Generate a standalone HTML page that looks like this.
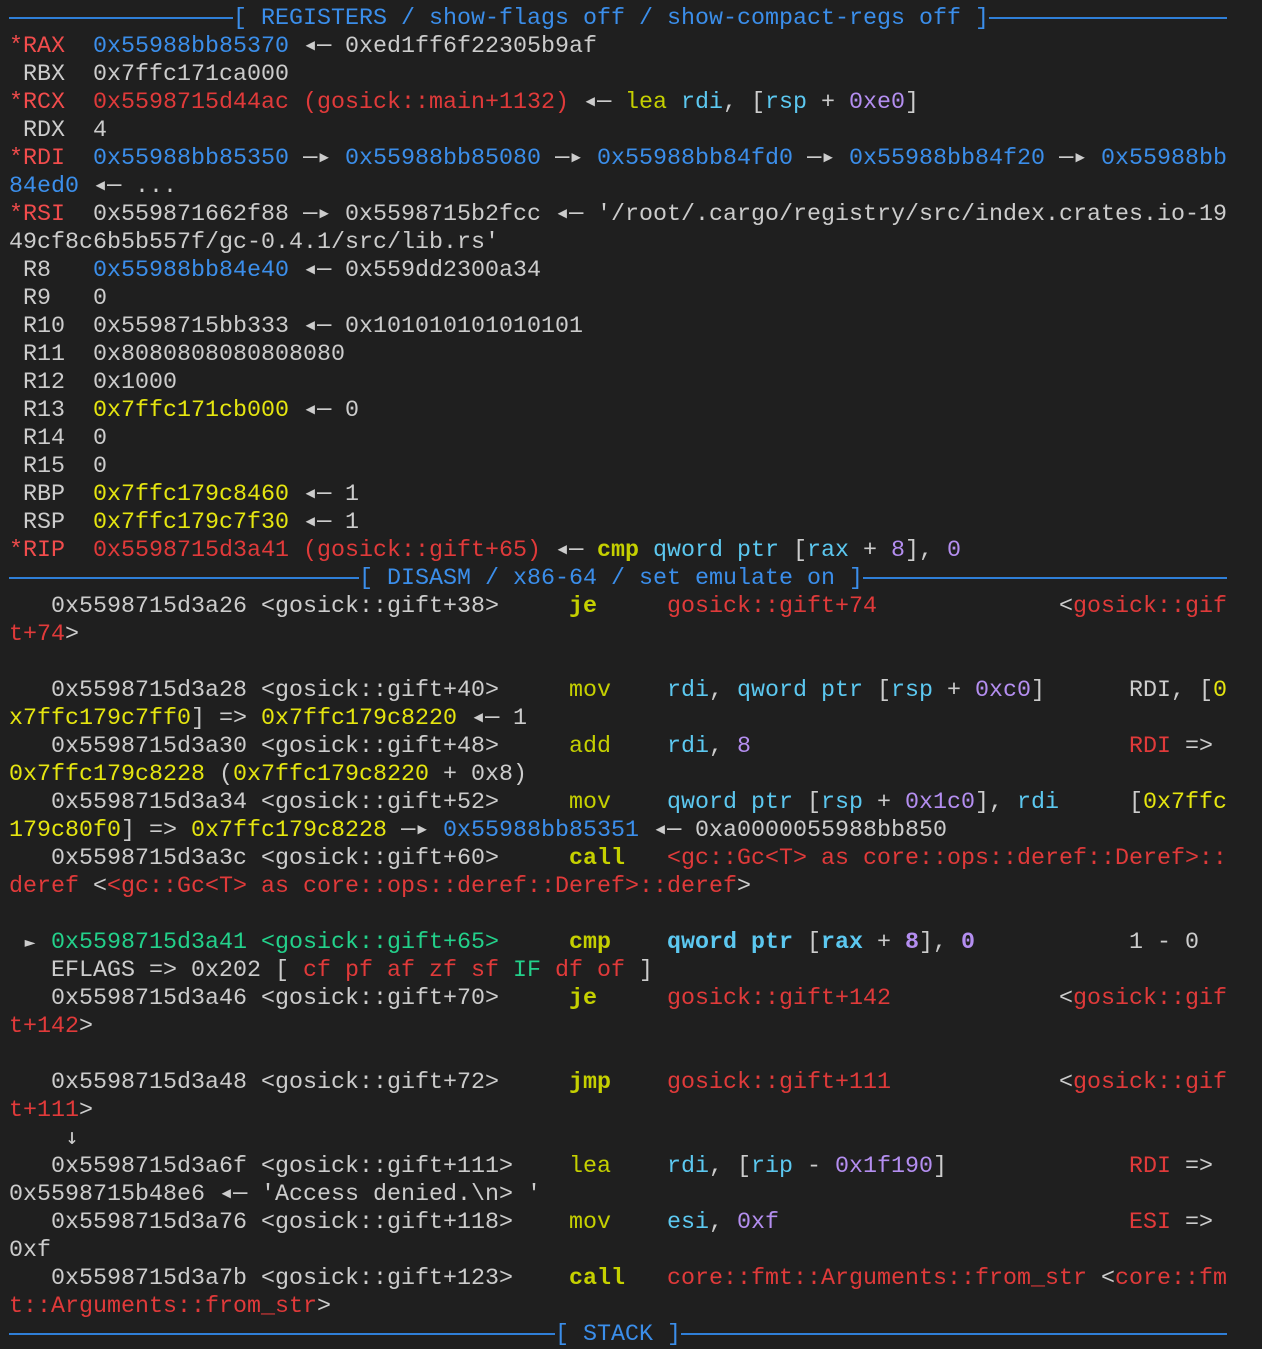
<!DOCTYPE html>
<html><head><meta charset="utf-8"><style>
html,body{margin:0;padding:0;background:#1f1f1f;}
body{width:1262px;height:1346px;overflow:hidden;}
#t{position:absolute;left:9px;top:5px;font-family:"Liberation Mono","DejaVu Sans Mono",monospace;font-size:23.33px;line-height:28px;color:#cccccc;}
.l{height:28px;white-space:pre;}
.R{color:#f14c4c}.r{color:#e03a3a}.b{color:#3b8eea}.y{color:#e5e510}.g{color:#23d18b}
.m{color:#c5d000}.B{font-weight:bold}.c{color:#5cc8f0}.p{color:#b48ef0}
.a{display:inline-block;width:14px;text-align:center;font-family:"DejaVu Sans Mono",monospace;font-size:24px;line-height:20px}
.hl{display:inline-block;height:2px;background:#2f7fd8;vertical-align:middle;}
.h{color:#3b8eea}
</style></head><body><div id="t"><div class="l"><span class="hl" style="width:224px"></span><span class="h">[ REGISTERS / show-flags off / show-compact-regs off ]</span><span class="hl" style="width:238px"></span></div>
<div class="l"><span class="R">*RAX</span>  <span class="b">0x55988bb85370</span> <span class="a">◂</span><span class="a">—</span> 0xed1ff6f22305b9af</div>
<div class="l"> RBX  0x7ffc171ca000</div>
<div class="l"><span class="R">*RCX</span>  <span class="r">0x5598715d44ac (gosick::main+1132)</span> <span class="a">◂</span><span class="a">—</span> <span class="m">lea</span> <span class="c">rdi</span>, [<span class="c">rsp</span> + <span class="p">0xe0</span>]</div>
<div class="l"> RDX  4</div>
<div class="l"><span class="R">*RDI</span>  <span class="b">0x55988bb85350</span> <span class="a">—</span><span class="a">▸</span> <span class="b">0x55988bb85080</span> <span class="a">—</span><span class="a">▸</span> <span class="b">0x55988bb84fd0</span> <span class="a">—</span><span class="a">▸</span> <span class="b">0x55988bb84f20</span> <span class="a">—</span><span class="a">▸</span> <span class="b">0x55988bb</span></div>
<div class="l"><span class="b">84ed0</span> <span class="a">◂</span><span class="a">—</span> ...</div>
<div class="l"><span class="R">*RSI</span>  0x559871662f88 <span class="a">—</span><span class="a">▸</span> 0x5598715b2fcc <span class="a">◂</span><span class="a">—</span> '/root/.cargo/registry/src/index.crates.io-19</div>
<div class="l">49cf8c6b5b557f/gc-0.4.1/src/lib.rs'</div>
<div class="l"> R8   <span class="b">0x55988bb84e40</span> <span class="a">◂</span><span class="a">—</span> 0x559dd2300a34</div>
<div class="l"> R9   0</div>
<div class="l"> R10  0x5598715bb333 <span class="a">◂</span><span class="a">—</span> 0x101010101010101</div>
<div class="l"> R11  0x8080808080808080</div>
<div class="l"> R12  0x1000</div>
<div class="l"> R13  <span class="y">0x7ffc171cb000</span> <span class="a">◂</span><span class="a">—</span> 0</div>
<div class="l"> R14  0</div>
<div class="l"> R15  0</div>
<div class="l"> RBP  <span class="y">0x7ffc179c8460</span> <span class="a">◂</span><span class="a">—</span> 1</div>
<div class="l"> RSP  <span class="y">0x7ffc179c7f30</span> <span class="a">◂</span><span class="a">—</span> 1</div>
<div class="l"><span class="R">*RIP</span>  <span class="r">0x5598715d3a41 (gosick::gift+65)</span> <span class="a">◂</span><span class="a">—</span> <span class="m B">cmp</span> <span class="c">qword ptr</span> [<span class="c">rax</span> + <span class="p">8</span>], <span class="p">0</span></div>
<div class="l"><span class="hl" style="width:350px"></span><span class="h">[ DISASM / x86-64 / set emulate on ]</span><span class="hl" style="width:364px"></span></div>
<div class="l">   0x5598715d3a26 &lt;gosick::gift+38&gt;     <span class="m B">je</span>     <span class="r">gosick::gift+74</span>             &lt;<span class="r">gosick::gif</span></div>
<div class="l"><span class="r">t+74</span>&gt;</div>
<div class="l"> </div>
<div class="l">   0x5598715d3a28 &lt;gosick::gift+40&gt;     <span class="m">mov</span>    <span class="c">rdi</span>, <span class="c">qword ptr</span> [<span class="c">rsp</span> + <span class="p">0xc0</span>]      RDI, [<span class="y">0</span></div>
<div class="l"><span class="y">x7ffc179c7ff0</span>] =&gt; <span class="y">0x7ffc179c8220</span> <span class="a">◂</span><span class="a">—</span> 1</div>
<div class="l">   0x5598715d3a30 &lt;gosick::gift+48&gt;     <span class="m">add</span>    <span class="c">rdi</span>, <span class="p">8</span>                           <span class="r">RDI</span> =&gt;</div>
<div class="l"><span class="y">0x7ffc179c8228</span> (<span class="y">0x7ffc179c8220</span> + 0x8)</div>
<div class="l">   0x5598715d3a34 &lt;gosick::gift+52&gt;     <span class="m">mov</span>    <span class="c">qword ptr</span> [<span class="c">rsp</span> + <span class="p">0x1c0</span>], <span class="c">rdi</span>     [<span class="y">0x7ffc</span></div>
<div class="l"><span class="y">179c80f0</span>] =&gt; <span class="y">0x7ffc179c8228</span> <span class="a">—</span><span class="a">▸</span> <span class="b">0x55988bb85351</span> <span class="a">◂</span><span class="a">—</span> 0xa0000055988bb850</div>
<div class="l">   0x5598715d3a3c &lt;gosick::gift+60&gt;     <span class="m B">call</span>   <span class="r">&lt;gc::Gc&lt;T&gt; as core::ops::deref::Deref&gt;::</span></div>
<div class="l"><span class="r">deref</span> &lt;<span class="r">&lt;gc::Gc&lt;T&gt; as core::ops::deref::Deref&gt;::deref</span>&gt;</div>
<div class="l"> </div>
<div class="l"> <span class="a" style="font-size:18px">►</span> <span class="g">0x5598715d3a41 &lt;gosick::gift+65&gt;</span>     <span class="m B">cmp</span>    <span class="c B">qword ptr</span> [<span class="c B">rax</span> + <span class="p B">8</span>], <span class="p B">0</span>           1 - 0</div>
<div class="l">   EFLAGS =&gt; 0x202 [ <span class="r">cf pf af zf sf</span> <span class="g">IF</span> <span class="r">df of</span> ]</div>
<div class="l">   0x5598715d3a46 &lt;gosick::gift+70&gt;     <span class="m B">je</span>     <span class="r">gosick::gift+142</span>            &lt;<span class="r">gosick::gif</span></div>
<div class="l"><span class="r">t+142</span>&gt;</div>
<div class="l"> </div>
<div class="l">   0x5598715d3a48 &lt;gosick::gift+72&gt;     <span class="m B">jmp</span>    <span class="r">gosick::gift+111</span>            &lt;<span class="r">gosick::gif</span></div>
<div class="l"><span class="r">t+111</span>&gt;</div>
<div class="l">    <span class="a" style="font-size:22px">↓</span></div>
<div class="l">   0x5598715d3a6f &lt;gosick::gift+111&gt;    <span class="m">lea</span>    <span class="c">rdi</span>, [<span class="c">rip</span> - <span class="p">0x1f190</span>]             <span class="r">RDI</span> =&gt;</div>
<div class="l">0x5598715b48e6 <span class="a">◂</span><span class="a">—</span> 'Access denied.\n&gt; '</div>
<div class="l">   0x5598715d3a76 &lt;gosick::gift+118&gt;    <span class="m">mov</span>    <span class="c">esi</span>, <span class="p">0xf</span>                         <span class="r">ESI</span> =&gt;</div>
<div class="l">0xf</div>
<div class="l">   0x5598715d3a7b &lt;gosick::gift+123&gt;    <span class="m B">call</span>   <span class="r">core::fmt::Arguments::from_str</span> &lt;<span class="r">core::fm</span></div>
<div class="l"><span class="r">t::Arguments::from_str</span>&gt;</div>
<div class="l"><span class="hl" style="width:546px"></span><span class="h">[ STACK ]</span><span class="hl" style="width:546px"></span></div></div></body></html>
